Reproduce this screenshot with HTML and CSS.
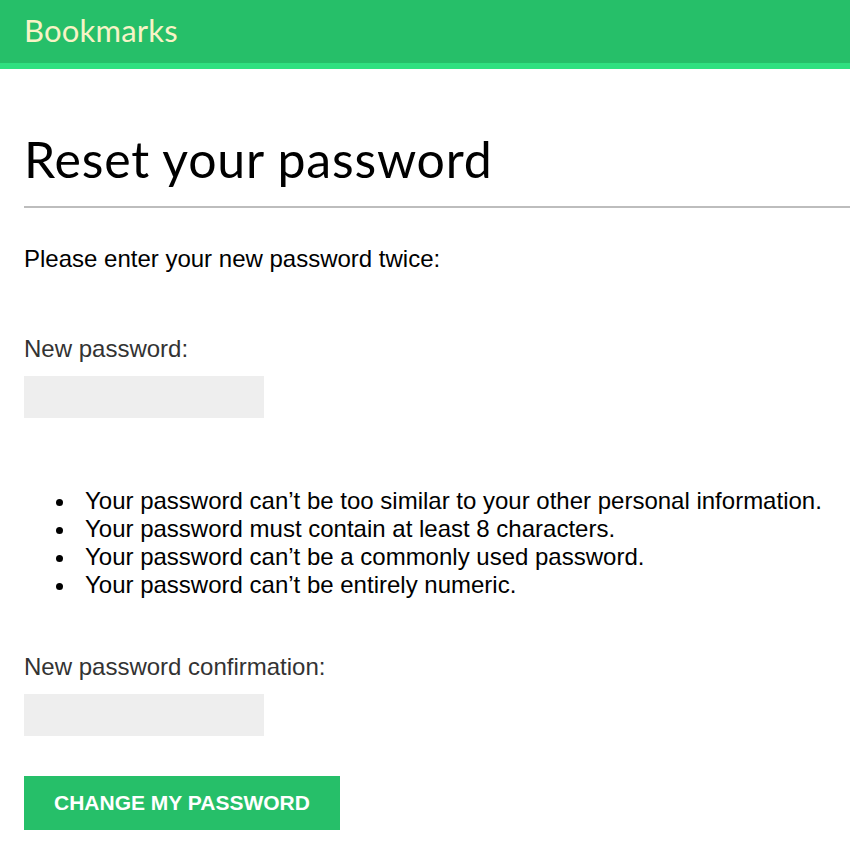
FILE: index.html
```html
<!DOCTYPE html>
<html>
<head>
<meta charset="utf-8">
<link rel="stylesheet" href="styles.css">
</head>
<body>
<header class="topbar">
  <div class="brand">Bookmarks</div>
</header>
<main class="content">
  <h1 class="title">Reset your password</h1>
  <hr class="rule">
  <p class="intro">Please enter your new password twice:</p>
  <form class="form">
    <label class="label" for="p1">New password:</label>
    <input class="field" id="p1" type="password">
    <ul class="hints">
      <li>Your password can’t be too similar to your other personal information.</li>
      <li>Your password must contain at least 8 characters.</li>
      <li>Your password can’t be a commonly used password.</li>
      <li>Your password can’t be entirely numeric.</li>
    </ul>
    <label class="label" for="p2">New password confirmation:</label>
    <input class="field" id="p2" type="password">
    <button class="submit" type="button">CHANGE MY PASSWORD</button>
  </form>
</main>
</body>
</html>
```
FILE: styles.css
```css
html, body {
  margin: 0;
  padding: 0;
  background: #fff;
}
body {
  font-family: "Liberation Sans", Arial, sans-serif;
  color: #000;
}
.topbar {
  background: #26bf69;
  height: 63px;
  border-bottom: 6px solid #2fe080;
  display: flex;
  align-items: center;
  padding-left: 24px;
}
.brand {
  font-family: Lato, "Open Sans", sans-serif;
  font-size: 31px;
  line-height: 37px;
  color: #f7f3c6;
  letter-spacing: 0.2px;
  margin-top: -3px;
}
.content {
  padding-left: 24px;
}
.title {
  font-family: Lato, "Open Sans", sans-serif;
  font-weight: 400;
  font-size: 50px;
  letter-spacing: 0.8px;
  margin: 0;
  padding-top: 60px;
  line-height: 60px;
}
.rule {
  border: 0;
  border-top: 2px solid #bdbdbd;
  margin: 17px 0 0 0;
}
.intro {
  font-size: 24px;
  margin: 37px 0 0 0;
  line-height: 28px;
}
.form {
  display: flex;
  flex-direction: column;
  align-items: flex-start;
}
.label {
  font-size: 24px;
  color: #333;
  line-height: 28px;
  margin-top: 62px;
}
.field {
  width: 240px;
  height: 42px;
  box-sizing: border-box;
  border: 0;
  background: #eee;
  margin-top: 13px;
}
.hints {
  font-size: 24px;
  line-height: 28px;
  margin: 69px 0 0 0;
  padding-left: 32px;
  list-style: none;
}
.hints li {
  display: flex;
}
.hints li::before {
  content: "";
  flex: none;
  width: 7px;
  height: 7px;
  border-radius: 50%;
  background: #000;
  margin-top: 12px;
  margin-right: 22px;
}
.hints + .label {
  margin-top: 54px;
}
.submit {
  margin-top: 40px;
  width: 316px;
  height: 54px;
  border: 0;
  background: #26bf69;
  color: #fff;
  font-family: "Liberation Sans", Arial, sans-serif;
  font-weight: 700;
  font-size: 21px;
  padding: 0;
}
```
